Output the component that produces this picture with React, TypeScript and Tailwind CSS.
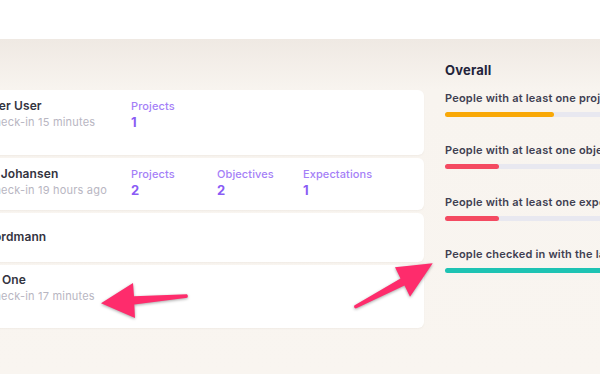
import React from "react";

type Stat = { label: string; value: string };
type Row = { name: string; sub?: string; stats: Stat[]; h: string; pt: string };

const rows: Row[] = [
  { name: "Member User", sub: "Last check-in 15 minutes", stats: [{ label: "Projects", value: "1" }], h: "h-[65px]", pt: "pt-[8px]" },
  {
    name: "Ola N. Johansen",
    sub: "Last check-in 19 hours ago",
    stats: [
      { label: "Projects", value: "2" },
      { label: "Objectives", value: "2" },
      { label: "Expectations", value: "1" },
    ],
    h: "h-[52px]",
    pt: "pt-[8px]",
  },
  { name: "Ola Nordmann", stats: [], h: "h-[49px]", pt: "pt-[16px]" },
  { name: "Player One", sub: "Last check-in 17 minutes", stats: [], h: "h-[63px]", pt: "pt-[7px]" },
];

const bars = [
  { label: "People with at least one project", fill: "w-[109px]", color: "bg-[#f9a806]" },
  { label: "People with at least one objective", fill: "w-[54px]", color: "bg-[#f44a61]" },
  { label: "People with at least one expectation", fill: "w-[54px]", color: "bg-[#f44a61]" },
  { label: "People checked in with the last week", fill: "w-full", color: "bg-[#1ec3b3]" },
];

export default function App() {
  return (
    <div className="relative w-[600px] h-[374px] overflow-hidden bg-white font-['Inter',sans-serif]">
      <div className="h-[39px] bg-white" />
      <div className="h-[335px] bg-gradient-to-b from-[#efe9e3] via-[#f8f4ef] via-[15%] to-[#f9f5f0]">
        <div className="flex items-start ml-[-56px] pt-[21px]">
          <div className="w-[480px] shrink-0 mt-[30px] flex flex-col gap-[3px]">
            {rows.map((r) => (
              <div key={r.name} className={`${r.h} ${r.pt} bg-white rounded-[6px] shadow-[0_1px_2px_rgba(120,100,80,0.06)] flex pl-[18px]`}>
                <div className="w-[169px] shrink-0">
                  <div className="text-[12px] leading-[16px] font-semibold text-[#34343f] tracking-[0.1px] whitespace-nowrap">{r.name}</div>
                  {r.sub && <div className="text-[11px] leading-[16px] text-[#b8b6c2] tracking-[0.2px] whitespace-nowrap">{r.sub}</div>}
                </div>
                {r.stats.map((s) => (
                  <div key={s.label} className="w-[86px] shrink-0">
                    <div className="text-[11px] leading-[16px] font-medium text-[#a57ff7] tracking-[0.1px]">{s.label}</div>
                    <div className="text-[13px] leading-[16px] font-bold text-[#8a5cf5]">{s.value}</div>
                  </div>
                ))}
              </div>
            ))}
          </div>
          <div className="ml-[21px] w-[240px] shrink-0">
            <div className="text-[13px] leading-[20px] font-bold text-[#23233a] tracking-[0.2px]">Overall</div>
            <div className="mt-[10px] flex flex-col gap-[25px]">
              {bars.map((b) => (
                <div key={b.label}>
                  <div className="text-[11px] leading-[16px] font-semibold text-[#3f3f52] whitespace-nowrap tracking-[0.2px]">{b.label}</div>
                  <div className="mt-[6px] h-[5px] rounded-full bg-[#e8e8f0]">
                    <div className={`h-[5px] rounded-full ${b.fill} ${b.color}`} />
                  </div>
                </div>
              ))}
            </div>
          </div>
        </div>
      </div>
      <svg className="absolute left-0 top-0 drop-shadow-[0_1px_1.5px_rgba(0,0,0,0.35)]" width="600" height="374" viewBox="0 0 600 374">
        <path
          d="M187,294.3 L134,296.3 L133,283 L101,303.3 L135,318 L134.3,304.5 L187.3,297.7 Q188.8,296 187,294.3 Z"
          fill="#fe2c6c"
        />
        <path
          d="M354.3,305.5 L400.5,278.5 L395,267.3 L432.7,263.3 L410,296.7 L404.5,285.5 L355.8,308.4 Q353.5,308 354.3,305.5 Z"
          fill="#fe2c6c"
        />
      </svg>
    </div>
  );
}
